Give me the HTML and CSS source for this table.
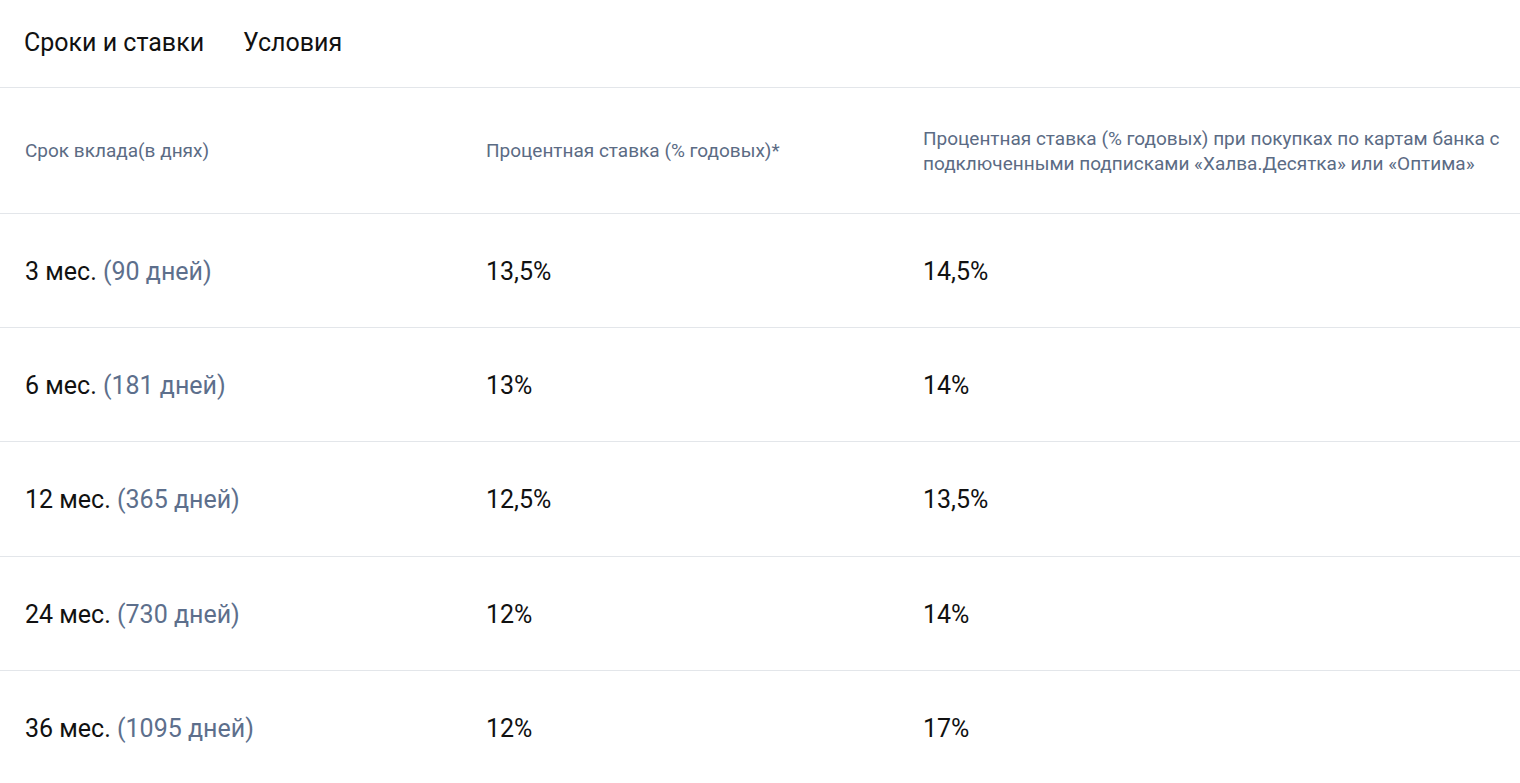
FILE: index.html
```html
<!DOCTYPE html>
<html lang="ru">
<head>
<meta charset="utf-8">
<link rel="stylesheet" href="styles.css">
</head>
<body>
<div class="page">
  <nav class="tabs">
    <span class="tab">Сроки и ставки</span>
    <span class="tab">Условия</span>
  </nav>
  <div class="table">
    <div class="row head">
      <div class="cell">Срок вклада(в днях)</div>
      <div class="cell">Процентная ставка (% годовых)*</div>
      <div class="cell">Процентная ставка (% годовых) при покупках по картам банка с подключенными подписками «Халва.Десятка» или «Оптима»</div>
    </div>
    <div class="row">
      <div class="cell">3 мес. <span class="days">(90 дней)</span></div>
      <div class="cell">13,5%</div>
      <div class="cell">14,5%</div>
    </div>
    <div class="row">
      <div class="cell">6 мес. <span class="days">(181 дней)</span></div>
      <div class="cell">13%</div>
      <div class="cell">14%</div>
    </div>
    <div class="row row-tall">
      <div class="cell">12 мес. <span class="days">(365 дней)</span></div>
      <div class="cell">12,5%</div>
      <div class="cell">13,5%</div>
    </div>
    <div class="row">
      <div class="cell">24 мес. <span class="days">(730 дней)</span></div>
      <div class="cell">12%</div>
      <div class="cell">14%</div>
    </div>
    <div class="row">
      <div class="cell">36 мес. <span class="days">(1095 дней)</span></div>
      <div class="cell">12%</div>
      <div class="cell">17%</div>
    </div>
  </div>
</div>
</body>
</html>
```

FILE: styles.css
```css
* { box-sizing: border-box; }
html, body { margin: 0; padding: 0; background: #fff; }
body {
  font-family: Roboto, "Noto Sans", sans-serif;
  color: #111;
}
.page { width: 1520px; }
.tabs {
  display: flex;
  gap: 39px;
  padding: 0 24px;
  height: 88px;
  align-items: center;
  border-bottom: 1px solid #e3e6ea;
}
.tab {
  font-size: 25px;
  color: #111;
  line-height: 1;
  margin-top: -2px;
}
.row {
  display: grid;
  grid-template-columns: 461px 437px 1fr;
  height: 114px;
  align-items: center;
  border-bottom: 1px solid #e3e6ea;
}
.row.row-tall { height: 115px; }
.row:last-child { border-bottom: none; }
.row.head {
  height: 126px;
}
.cell {
  padding: 2px 16px 0 25px;
  font-size: 25px;
  line-height: 30px;
}
.head .cell {
  padding-top: 0;
  font-size: 19px;
  line-height: 25px;
  color: #5b6b84;
}
.days { color: #5d6f8c; }
```
